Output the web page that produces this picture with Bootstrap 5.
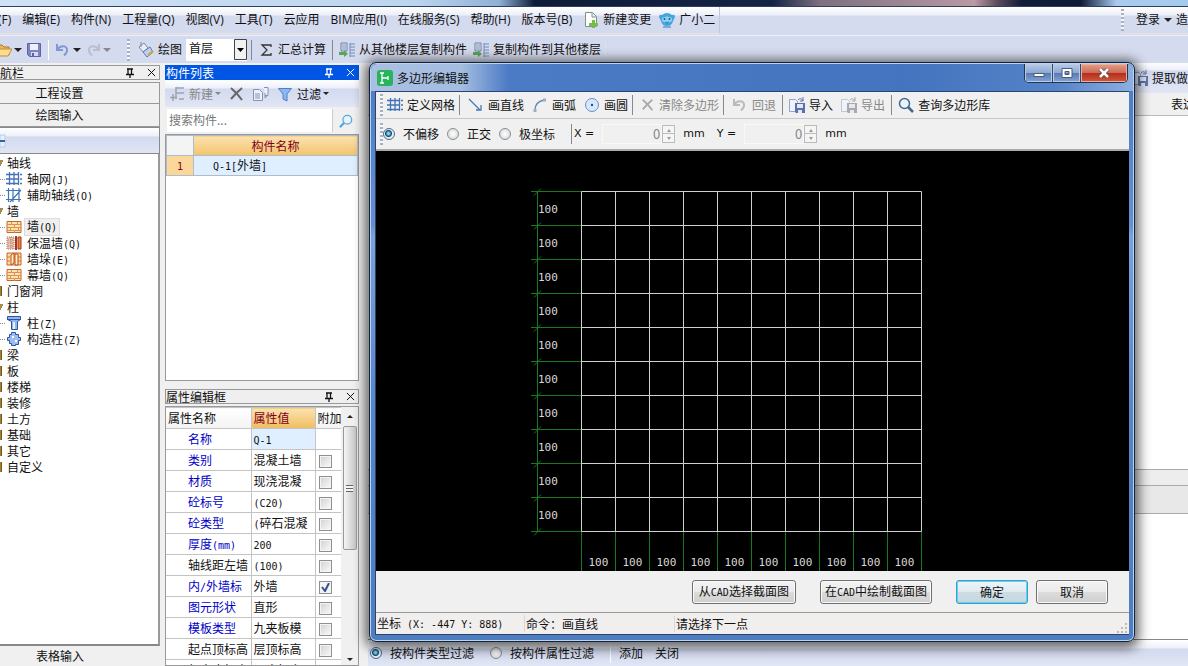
<!DOCTYPE html>
<html lang="zh-CN">
<head>
<meta charset="utf-8">
<meta name="viewport" content="width=device-width, initial-scale=1">
<title>多边形编辑器</title>
<link href="https://cdn.jsdelivr.net/npm/bootstrap@5.3.0/dist/css/bootstrap.min.css" rel="stylesheet">
<style>
body{font:12px/16px "Open Sans","Noto Sans CJK SC",sans-serif;color:#111;background:#d5dbee;height:100vh;overflow:hidden;white-space:nowrap}
svg{flex:none;display:block}
.i16{width:16px;height:16px}
.gap-m{margin-left:6px;margin-right:6px}
.gap-s{margin-left:2px}
button,input,select{font:inherit;color:inherit}
.flatbtn{border:0;background:none;padding:0;display:flex;align-items:center;gap:4px}
.flatbtn:disabled{color:#888}
.menu-link{color:#111;text-decoration:none}
.lt{font:10px/14px "DejaVu Sans Mono",monospace}
.axis{font:11px/16px "DejaVu Sans",sans-serif}
.caret{width:0;height:0;border:4px solid transparent;border-top-color:#222;border-bottom:0;flex:none}
.caret.sm{border-width:3px;border-bottom:0}
.caret.dim{border-top-color:#888}
.grip{width:3px;height:22px;background:repeating-linear-gradient(#a9b0c4 0 2px,#f6f8fd 2px 4px);flex:none}
.vsep{width:1px;height:20px;background:#85888f;flex:none}
/* application frame */
.titlestrip{height:6px;background:linear-gradient(90deg,#cfe2f6 0,#bcd5ef 35%,#8fb1d6 42%,#0d1c38 45%,#142444 65%,#7d7080 69%,#b99aa5 82%,#5a4a5d 84%,#111d38 86%,#0e1c39 91%,#a9cbef 94%,#a6c9ee 100%)}
.menubar{height:29px;border-top:1px solid #30405c;background:linear-gradient(#fff 0,#eceff9 8px,#d5dbee 9px)}
.strip{height:27px;border-right:1px solid #c2c7d8;border-bottom:1px solid #e9e4e2}
.toolstrip{height:28px;background:#d5dbee;border-top:1px solid #edf0f8}
.folder-btn{margin-left:-4px}
.floor{appearance:none;border:0;border-radius:0;width:61px;height:22px;padding:0 0 2px 3px;font-size:12px;background:#fff url("data:image/svg+xml,%3Csvg xmlns='http://www.w3.org/2000/svg' width='13' height='22'%3E%3Cpath d='M.5.5h12v20H.5z' fill='%23f2f2f2' stroke='%23444'/%3E%3Cpath d='M3 9h7l-3.500 4z' fill='%23000'/%3E%3C/svg%3E") right top no-repeat}
.shade{background:linear-gradient(#fff,#edf0f9 8px,#d3daef 9px,#e1e6f5)}
.workspace{background:#f0f0f0;padding-top:2px;gap:5px}
.song{font-family:"Noto Sans CJK SC",sans-serif}
/* navigator */
.navpane{width:160px}
.panehead{height:15px;border:1px solid #999;background:#efefef;padding-right:3px;line-height:12px;gap:12px;flex:none}
.panehead.on{background:#0055e5;color:#fff;border-color:#0055e5}
.wide-btn{height:23px;border:1px solid #999;border-width:0 1px 1px 0;background:#f0f0f0;padding:0 40px 0 0;flex:none}
.wide-btn.first{height:22px;border-top-width:1px;margin-top:2px}
.navtools{height:27px;border:1px solid #8a8a8a;border-left:0;flex:none}
.tree{border-right:2px solid #999;border-bottom:2px solid #888;background:#fff;list-style:none;margin:0;padding:1px 0 0}
.tree li{height:16px;display:flex;align-items:center;line-height:16px}
.tree .kid{gap:3px;padding-left:6px;background:repeating-linear-gradient(90deg,#888 0 1px,transparent 1px 2px) 0 8px/6px 1px no-repeat}
.tree .kid>span{padding:0 2px}
.tree .sel{background:#efefef;outline:1px solid #ddd;line-height:14px}
.twig{width:7px;flex:none;height:12px}
.twig.shut{background:linear-gradient(90deg,#b89445,#5e430d) 0 1px/2px 10px no-repeat}
.twig.open{background:linear-gradient(120deg,#a28d4b 0 60%,transparent 61%) 0 3px/3px 6px no-repeat}
/* middle column */
.midpane{width:194px}
.findbox{border:0;width:166px;height:23px;padding:0 2px 2px;background:#fff;border-right:1px solid #ccc;border-radius:0}
.findbox::placeholder{color:#777;opacity:1}
.boxed{border:1px solid #999;background:#fff}
table{border-collapse:collapse;table-layout:fixed}
.parts td,.parts th{border:1px solid #aebccc;height:20px;padding:0;font-weight:400;line-height:16px}
.gold{background:linear-gradient(#fbe2b0,#f3c36c);color:#800020}
.props td,.props th{border:1px solid #c4c4c4;border-left:0;height:21px;padding:0 2px;font-weight:400;line-height:18px;overflow:hidden}
.props th{background:linear-gradient(#fff,#f3f3f3)}
.props th.gold{background:linear-gradient(#fbe2b0,#f0bd60)}
.props td:first-child{padding-left:22px;padding-right:0;color:#0000c8}
.props td.plain:first-child{color:#111}
.props td:last-child,.props th:last-child{border-right:0}
.tick{appearance:none;display:block;width:13px;height:13px;margin:2px 0 0 1px;border:1px solid #8e8f8f;background:linear-gradient(135deg,#cfd2d6,#fafafa);box-shadow:inset 0 0 0 1px #f4f4f4}
.tick:checked{background:#f2f4f8 url("data:image/svg+xml,%3Csvg xmlns='http://www.w3.org/2000/svg' viewBox='0 0 11 11'%3E%3Cpath d='M2 5l3 4 4-8' fill='none' stroke='%2336508c' stroke-width='2'/%3E%3C/svg%3E")}
.scroller{width:17px;background:#f0f0f0;flex:none}
.thumb{width:14px;height:124px;border:1px solid #999;border-radius:2px;background:linear-gradient(90deg,#f5f5f5,#d8d8d8 60%,#c6c6c6)}
.thumb i{width:7px;height:7px;background:repeating-linear-gradient(#666 0 1px,#f4f4f4 1px 3px)}
/* drawing area behind the dialog */
.backpane{min-width:0;margin:-3px 0 0 4px}
/* dialog */
.dlg{position:absolute;left:369px;right:53px;top:62px;bottom:24px;border:1px solid #14213a;border-radius:7px;background:linear-gradient(#4a7ac4,#6590cf 28%,#79a3dc 30%,#5885c6 60%,#4e7dc0);padding:1px 5px 6px;box-shadow:inset 0 0 0 1px #b9d3f3,0 2px 12px 4px rgba(0,0,0,.6)}
.dlg-title{height:27px;margin:0 -4px;padding-left:6px;background:linear-gradient(90deg,#a9c0e2 0,#a3bce0 12%,#4c7bc5 18%,#4474bf 70%,#5583c8 90%,#8eb0df);border-radius:6px 6px 0 0}
.capbtns{height:19px;border:1px solid #25324d;border-top:0;border-radius:0 0 5px 5px;overflow:hidden;margin-right:5px}
.capbtns button{border:0;border-right:1px solid #33486d;padding:0;width:28px;background:linear-gradient(#b9cbe6,#8ca8d3 48%,#5679b2 50%,#83a4d5);display:flex;align-items:center;justify-content:center;box-shadow:inset 0 0 0 1px #b8cce8}
.capbtns .x{width:46px;border-right:0;background:linear-gradient(#e3a08d,#d06a56 48%,#b32d1c 50%,#d05a3a);box-shadow:inset 0 0 0 1px #e9b0a0}
.dlg-body{border:1px solid #2a4370;border-width:1px 0 1px 1px;background:#f0f0f0}
.row-a{height:27px;border-bottom:1px solid #c8c8c8;padding-left:4px}
.row-b{height:32px;border-bottom:2px solid #aaa;padding-left:4px}
.radio{appearance:none;width:12px;height:12px;margin:0;border:1px solid #8a8d90;border-radius:50%;background:radial-gradient(#fff,#cfd2d5);flex:none}
.radio:checked{border-color:#4c6a86;background:radial-gradient(circle at 45% 45%,#7fd0f0 0 1px,#11486f 3px,#11486f 3px,#e4eef4 4px)}
.num{width:60px;height:20px;border:1px solid #f8f8f8;background:#f0f0f0;color:#888;text-align:right;padding:0 1px 2px;font-size:13px}
.spin{width:13px;height:18px;border:1px solid #bbb;background:linear-gradient(#f5f5f5 7px,#bbb 7px 8px,#f5f5f5 8px);display:flex;flex-direction:column;align-items:center;justify-content:space-around;flex:none}
.spin .caret{border-width:2px;border-top-width:3px;border-bottom:0;border-top-color:#999}
.up{transform:rotate(180deg)}
.canvas{background:#000;min-height:0;overflow:hidden}
.canvas text{font:11px "DejaVu Sans Mono",monospace;fill:#d8d8d8}
.foot{height:41px;padding-right:21px}
.pbtn{height:24px;border:1px solid #707070;border-radius:3px;background:linear-gradient(#f3f3f3,#ebebeb 48%,#dcdcdc 50%,#cfcfcf);box-shadow:inset 0 0 0 1px #fafafa;padding:0 6px}
.pbtn.def{border-color:#3c9cc4;box-shadow:inset 0 0 0 1px #5fd2f5;background:linear-gradient(#edf5f8,#dfeaf0 48%,#cddce4 50%,#c5d8e2)}
.w72{width:72px}
.status{height:22px;border-top:1px solid #999;background:#f1eeee}
.status>div{border-right:1px solid #d8d8d8;padding-left:1px}
</style>
</head>
<body class="d-flex flex-column">
<svg width="0" height="0" class="position-absolute" aria-hidden="true">
 <symbol id="grid" viewBox="0 0 16 16"><path d="M0 3.500h16M0 8h16M0 12.500h16M3.500 1v14M8 1v14M12.500 1v14" stroke="#4272b8" stroke-width="1.300" stroke-dasharray="13 1"/></symbol>
 <symbol id="aux" viewBox="0 0 16 16"><path d="M0 3.500h15M0 12.500h15M2.500 1v14M7 1v14M13 1v14M4 15L15 3" stroke="#4272b8" stroke-width="1.200"/></symbol>
 <symbol id="brick" viewBox="0 0 16 16"><path d="M1 2.500h14v11H1z" fill="#fde3ae" stroke="#c9642a"/><path d="M1 5.500h14M1 8.500h14M1 11.500h14M5.500 3v2M11.500 3v2M8.500 6v2M4.500 9v2M12.500 9v2M8.500 12v2" stroke="#dd8f55"/></symbol>
 <symbol id="warm" viewBox="0 0 16 16"><path d="M1 2h7v12H1z" fill="#e9c5b4" stroke="#a8705c" stroke-dasharray="1 1"/><path d="M9 1h2v14H9z" fill="#ab3418"/><path d="M12 2h3v12h-3z" fill="#e8833e" stroke="#a33818"/><path d="M2 5h6M2 8h6M2 11h6M5 2v12" stroke="#b07c68" stroke-dasharray="1 1"/></symbol>
 <symbol id="pier" viewBox="0 0 16 16"><path d="M1 2h14v12H1z" fill="#fbdc9c" stroke="#c9642a"/><path d="M1 6h3M1 10h3M12 6h3M12 10h3" stroke="#d87a3c"/><path d="M5 4l3-2v10l-3 2zM9 3h3v11H9z" fill="#fff0cf" stroke="#c04c1c"/></symbol>
 <symbol id="col" viewBox="0 0 16 16"><path d="M1.500 1.500h13v3l-3 2v8h-6v-8l-4-2z" fill="#8fb4ee" stroke="#2b55a3"/><path d="M1 4.500h14" stroke="#2b55a3"/><path d="M8 7v7" stroke="#e8f1ff" stroke-width="2"/></symbol>
 <symbol id="ccol" viewBox="0 0 16 16"><path d="M3.500 3.500h2v-2h4v2h3v3h2v3h-2v4h-3v1h-4v-2h-2v-3h-2v-3h2z" fill="#9cbdf1" stroke="#2b55a3"/><path d="M6 5h2v2H6zM9 9h2v2H9z" fill="#fff"/></symbol>
 <symbol id="folder" viewBox="0 0 16 16"><path d="M0 3h6l2 2h5v8H0z" fill="#e9b85a" stroke="#a9792a"/><path d="M3 7h13l-4 7H0z" fill="#fbdc93" stroke="#c0902f"/></symbol>
 <symbol id="save" viewBox="0 0 16 16"><path d="M1.500 1.500h13v13h-11l-2-2z" fill="#7e83c6" stroke="#5c62ac"/><path d="M4 2h8v6H4z" fill="#eef0fb"/><path d="M5 10h7v4H5z" fill="#d5d8ee"/><path d="M6 11h2v3H6z" fill="#5c62ac"/></symbol>
 <symbol id="undo" viewBox="0 0 16 16"><path d="M2 2v6h6M2.500 7.500C5 3 13 3 12 9c-.4 2-1.500 3-3 4.500" fill="none" stroke="currentColor" stroke-width="2"/></symbol>
 <symbol id="paint" viewBox="0 0 16 16"><path d="M1 5l5-4 4 5-5 4z" fill="#e8edf6" stroke="#7d8aa5"/><path d="M5 10l7-5 3 5-6 5z" fill="#bcd0ef" stroke="#5c7cb0"/><path d="M10 13l5-4" stroke="#d6a335" stroke-width="2"/><path d="M3 0v5" stroke="#7d8aa5"/></symbol>
 <symbol id="copy" viewBox="0 0 16 16"><path d="M2 1h6v8H2z" fill="#e3eafa" stroke="#6c7d9c"/><path d="M3 3h4M3 5h4M3 7h4" stroke="#7b90b8"/><path d="M0 10h5v-2l4 4-4 3v-2H0z" fill="#58a85a"/><path d="M11 1v14M11 2h5M11 5h5M11 8h5M11 11h5M11 14h5" stroke="#6f8cb8"/></symbol>
 <symbol id="newdoc" viewBox="0 0 16 16"><path d="M2.500.5h7l4 4v10h-11z" fill="#fff" stroke="#7b9585"/><path d="M9 1v4h4" fill="#e1edf8" stroke="#7b9585"/><path d="M9 8h3v3h3v3h-3v2H9v-2H6v-3h3z" fill="#79bb4a"/></symbol>
 <symbol id="face" viewBox="0 0 16 16"><path d="M0 5Q0 2 3 3q5-4 10 0 3-1 3 2l-2 4q-1 5-6 5T2 9z" fill="#43a5dd"/><path d="M3 6q5-3 10 0v3q-5 4-10 0z" fill="#8fd0f2"/><circle cx="5.500" cy="7" r="1" fill="#185c91"/><circle cx="10.500" cy="7" r="1" fill="#185c91"/><path d="M6 10q2 1.500 4 0M4 15h8" stroke="#2381bb" fill="none"/></symbol>
 <symbol id="pin" viewBox="0 0 10 10"><path d="M2 1h6M3 1v5M6.500 1v5M1 6.500h8M5 6v4" fill="none" stroke="currentColor" stroke-width="1.300"/></symbol>
 <symbol id="shut" viewBox="0 0 10 10"><path d="M1 1l8 8M9 1l-8 8" stroke="currentColor" stroke-width="1.100"/></symbol>
 <symbol id="cross" viewBox="0 0 16 16"><path d="M2 2q6 5 11 12M13 2Q7 7 2 13" fill="none" stroke="currentColor" stroke-width="2"/></symbol>
 <symbol id="newitem" viewBox="0 0 16 16"><path d="M7 2h8M7 7h8M10 13h5M7 1v12M4 8v7M1 11.500h7" stroke="#9da2ae" stroke-width="1.500"/></symbol>
 <symbol id="dup" viewBox="0 0 16 16"><path d="M.5 3.500h6l3 3v8h-9zM11 1.500h4v8h-3" fill="#edf1fa" stroke="#8493b2"/><path d="M2 8h5M2 10h5M2 12h5M12 7v5l3-3" fill="none" stroke="#8493b2"/></symbol>
 <symbol id="funnel" viewBox="0 0 16 16"><path d="M1.500 2.500h13L10 8v7l-4-2V8z" fill="#8db7f2" stroke="#4c80cb"/></symbol>
 <symbol id="lens" viewBox="0 0 16 16"><circle cx="6.500" cy="6.500" r="5" fill="#e7f4fe" stroke="currentColor" stroke-width="1.500"/><path d="M10 10l5 5" stroke="currentColor" stroke-width="2.500"/></symbol>
 <symbol id="line" viewBox="0 0 16 16"><path d="M1 2l11 11M13 8v5H8" fill="none" stroke="#4778b8" stroke-width="1.300"/></symbol>
 <symbol id="arc" viewBox="0 0 16 16"><path d="M3 13Q3 5 12 3" fill="none" stroke="#5c86c0" stroke-width="1.300"/><path d="M1.500 12h3v3h-3zM11 1.500h3v3h-3z" fill="#9dadc8"/></symbol>
 <symbol id="circ" viewBox="0 0 16 16"><circle cx="8" cy="8" r="6.500" fill="#d8e8fb" stroke="#688fd0"/><circle cx="8" cy="8" r="1.200" fill="#244e9f"/></symbol>
 <symbol id="io" viewBox="0 0 16 16"><path d="M.5 2.500h6l2 2v10h-8z" fill="#eef3fd" stroke="currentColor" stroke-opacity=".6"/><path d="M6 6h10v10H7l-1-1z" fill="currentColor"/><path d="M8 7h6v4H8zM9 13h4v3H9z" fill="#e4e8f4"/><path d="M9 3q3-3 5 1M14 0v4h-3" fill="none" stroke="currentColor"/></symbol>
</svg>

<div class="titlestrip flex-shrink-0"></div>
<nav class="menubar flex-shrink-0 d-flex justify-content-between" aria-label="菜单">
 <div class="strip d-flex align-items-center pe-1" style="gap:11px">
  <a class="menu-link" href="#" style="margin-left:-2px">(F)</a><a class="menu-link" href="#">编辑(E)</a><a class="menu-link" href="#">构件(N)</a><a class="menu-link" href="#">工程量(Q)</a><a class="menu-link" href="#">视图(V)</a><a class="menu-link" href="#">工具(T)</a><a class="menu-link" href="#">云应用</a><a class="menu-link" href="#">BIM应用(I)</a><a class="menu-link" href="#">在线服务(S)</a><a class="menu-link" href="#">帮助(H)</a><a class="menu-link" href="#">版本号(B)</a>
  <div class="d-flex gap-2"><button class="flatbtn"><svg class="i16"><use href="#newdoc"/></svg>新建变更</button><button class="flatbtn"><svg class="i16"><use href="#face"/></svg>广小二</button></div>
 </div>
 <div class="strip border-end-0 d-flex align-items-center"><span class="grip me-2"></span><button class="flatbtn gap-0 ms-1">登录<span class="caret mx-1"></span></button><button class="flatbtn">造</button></div>
</nav>
<div class="toolstrip flex-shrink-0 d-flex align-items-center">
 <svg class="i16 folder-btn"><use href="#folder"/></svg><span class="caret gap-s"></span>
 <svg class="i16 ms-1"><use href="#save"/></svg><span class="vsep bg-white gap-m"></span>
 <svg class="i16" style="color:#7e9ad2"><use href="#undo"/></svg><span class="caret gap-s"></span>
 <svg class="i16 ms-1" style="color:#b9bfcd;transform:scaleX(-1)"><use href="#undo"/></svg><span class="caret dim gap-s"></span>
 <span class="grip ms-3 me-2"></span>
 <button class="flatbtn me-1"><svg class="i16"><use href="#paint"/></svg>绘图</button>
 <select class="floor" aria-label="楼层"><option>首层</option></select>
 <span class="vsep ms-1 me-2"></span>
 <button class="flatbtn"><svg width="14" height="14" viewBox="0 0 14 14"><path d="M11 4V2H2l5 5-5 5h9v-2" fill="none" stroke="#333" stroke-width="1.300"/></svg>汇总计算</button>
 <span class="vsep gap-m"></span>
 <button class="flatbtn gap-m ms-0"><svg class="i16"><use href="#copy"/></svg>从其他楼层复制构件</button>
 <button class="flatbtn pe-1 border-end"><svg class="i16"><use href="#copy"/></svg>复制构件到其他楼层</button>
</div>

<main class="workspace flex-grow-1 d-flex overflow-hidden song">
 <aside class="navpane flex-shrink-0 d-flex flex-column">
  <div class="panehead d-flex align-items-center border-start-0"><span class="me-auto">航栏</span><svg width="10" height="10"><use href="#pin"/></svg><svg width="9" height="9"><use href="#shut"/></svg></div>
  <button class="wide-btn first">工程设置</button>
  <button class="wide-btn">绘图输入</button>
  <div class="navtools shade d-flex align-items-center"><svg width="6" height="14" viewBox="0 0 6 14"><path d="M0 1h5v12H0z" fill="#e5f0ff" stroke="#b8cdea"/><path d="M0 7h5" stroke="#30659f" stroke-width="2"/></svg></div>
  <ul class="tree flex-grow-1">
   <li><i class="twig open"></i>轴线</li>
   <li class="kid"><svg class="i16"><use href="#grid"/></svg><span>轴网<span class="lt">(J)</span></span></li>
   <li class="kid"><svg class="i16"><use href="#aux"/></svg><span>辅助轴线<span class="lt">(O)</span></span></li>
   <li><i class="twig open"></i>墙</li>
   <li class="kid"><svg class="i16"><use href="#brick"/></svg><span class="sel">墙<span class="lt">(Q)</span></span></li>
   <li class="kid"><svg class="i16"><use href="#warm"/></svg><span>保温墙<span class="lt">(Q)</span></span></li>
   <li class="kid"><svg class="i16"><use href="#pier"/></svg><span>墙垛<span class="lt">(E)</span></span></li>
   <li class="kid"><svg class="i16"><use href="#brick"/></svg><span>幕墙<span class="lt">(Q)</span></span></li>
   <li><i class="twig shut"></i>门窗洞</li>
   <li><i class="twig open"></i>柱</li>
   <li class="kid"><svg class="i16"><use href="#col"/></svg><span>柱<span class="lt">(Z)</span></span></li>
   <li class="kid"><svg class="i16"><use href="#ccol"/></svg><span>构造柱<span class="lt">(Z)</span></span></li>
   <li><i class="twig shut"></i>梁</li><li><i class="twig shut"></i>板</li><li><i class="twig shut"></i>楼梯</li><li><i class="twig shut"></i>装修</li><li><i class="twig shut"></i>土方</li><li><i class="twig shut"></i>基础</li><li><i class="twig shut"></i>其它</li><li><i class="twig shut"></i>自定义</li>
  </ul>
  <button class="wide-btn border-0" style="height:20px">表格输入</button>
 </aside>

 <section class="midpane flex-shrink-0 d-flex flex-column">
  <div class="panehead on d-flex align-items-center"><span class="me-auto">构件列表</span><svg width="10" height="10"><use href="#pin"/></svg><svg width="9" height="9"><use href="#shut"/></svg></div>
  <div class="shade d-flex align-items-center ps-1 flex-shrink-0" style="height:27px">
   <button class="flatbtn me-2" disabled><svg class="i16"><use href="#newitem"/></svg>新建<span class="caret sm dim" style="margin-left:-2px"></span></button>
   <svg class="i16 me-2" style="color:#666"><use href="#cross"/></svg><svg class="i16 me-2"><use href="#dup"/></svg>
   <button class="flatbtn"><svg class="i16"><use href="#funnel"/></svg>过滤<span class="caret sm" style="margin-left:-2px"></span></button>
  </div>
  <div class="d-flex align-items-center flex-shrink-0" style="height:27px"><input class="findbox gap-s" placeholder="搜索构件..." aria-label="搜索构件"><svg class="gap-m" width="14" height="14" style="color:#56a8dc;transform:scaleX(-1)"><use href="#lens"/></svg></div>
  <div class="boxed flex-shrink-0" style="height:247px">
   <table class="parts w-100"><colgroup><col style="width:27px"><col></colgroup>
    <tr><th style="background:#f4f4f4"></th><th class="gold text-center">构件名称</th></tr>
    <tr><td class="text-center" style="background:#fcd79a;color:#800020"><span class="lt">1</span></td><td style="background:#dfefff;padding-left:19px"><span class="lt">Q-1[</span>外墙<span class="lt">]</span></td></tr>
   </table>
  </div>
  <div class="panehead d-flex align-items-center mt-2"><span class="me-auto">属性编辑框</span><svg width="10" height="10"><use href="#pin"/></svg><svg width="9" height="9"><use href="#shut"/></svg></div>
  <div class="boxed d-flex flex-grow-1 overflow-hidden" style="min-height:0;margin-top:2px">
   <table class="props flex-grow-1" style="width:174px;height:0"><colgroup><col style="width:85px"><col style="width:64px"><col></colgroup>
    <thead><tr><th>属性名称</th><th class="gold">属性值</th><th>附加</th></tr></thead>
    <tbody id="props"></tbody>
   </table>
   <div class="scroller d-flex flex-column align-items-center justify-content-between"><div class="d-flex flex-column align-items-center"><span class="caret sm up my-2"></span><div class="thumb d-flex align-items-center justify-content-center"><i></i></div></div><span class="caret sm mb-1"></span></div>
  </div>
 </section>

 <section class="backpane flex-grow-1 d-flex flex-column">
  <div class="shade d-flex justify-content-end align-items-center flex-shrink-0" style="height:31px"><svg class="i16 gap-m ms-0 me-1" style="color:#6277ad"><use href="#io"/></svg>提取做</div>
  <div class="d-flex justify-content-end align-items-center flex-shrink-0" style="height:23px;border-bottom:1px solid #bbb;margin-right:-7px">表达</div>
  <div class="bg-white flex-grow-1"></div>
  <div class="flex-shrink-0" style="height:17px;border:solid #aaa;border-width:1px 0;background:#ededed"></div>
  <div class="flex-shrink-0" style="height:28px;border-bottom:1px solid #aaa;background:#e8e8e8"></div>
  <div class="bg-white flex-shrink-0" style="height:125px"></div>
  <div class="shade d-flex align-items-center flex-shrink-0 ps-1" style="height:27px;border-top:1px solid #888">
   <input class="radio me-2" style="margin-left:-2px" type="radio" name="flt" id="f1" checked><label for="f1">按构件类型过滤</label>
   <input class="radio ms-3 me-2" type="radio" name="flt" id="f2"><label for="f2">按构件属性过滤</label>
   <span class="vsep bg-white ms-3 me-2"></span><button class="flatbtn">添加</button><button class="flatbtn ms-2 ps-1">关闭</button>
  </div>
 </section>
</main>

<section class="dlg d-flex flex-column song" role="dialog" aria-labelledby="dt">
 <header class="dlg-title flex-shrink-0 d-flex align-items-center">
  <svg width="16" height="16" viewBox="0 0 16 16" class="me-1"><rect width="16" height="16" rx="3" fill="#28b35c"/><path d="M5 3v10M5 8h6M11 6v4M3 3h4M3 13h4" stroke="#fff" stroke-width="1.300"/></svg><span id="dt">多边形编辑器</span>
  <div class="capbtns d-flex ms-auto align-self-start">
   <button aria-label="最小化"><svg width="12" height="10"><path d="M1 5.500h10v3H1z" fill="#fff" stroke="#4b5b78"/></svg></button>
   <button aria-label="最大化"><svg width="12" height="10"><path d="M1 .5h10v9H1zM4 3.500h4v3H4z" fill="#fff" fill-rule="evenodd" stroke="#4b5b78"/></svg></button>
   <button class="x" aria-label="关闭窗口"><svg width="12" height="10"><path d="M2 1l8 8M10 1L2 9" stroke="#58433f" stroke-width="4"/><path d="M2 1l8 8M10 1L2 9" stroke="#fff" stroke-width="2.500"/></svg></button>
  </div>
 </header>
 <div class="dlg-body flex-grow-1 d-flex flex-column" style="min-height:0">
  <div class="row-a flex-shrink-0 d-flex align-items-center">
   <span class="grip me-1"></span>
   <button class="flatbtn"><svg class="i16"><use href="#grid"/></svg>定义网格</button><span class="vsep ms-1 me-2"></span>
   <button class="flatbtn me-2"><svg class="i16"><use href="#line"/></svg>画直线</button>
   <button class="flatbtn me-2"><svg class="i16"><use href="#arc"/></svg>画弧</button>
   <button class="flatbtn"><svg class="i16"><use href="#circ"/></svg>画圆</button><span class="vsep ms-1 me-2"></span>
   <button class="flatbtn" disabled><svg width="14" height="14" style="color:#aaa"><use href="#cross"/></svg>清除多边形</button><span class="vsep ms-1 me-2"></span>
   <button class="flatbtn" disabled><svg class="i16" style="color:#bbb"><use href="#undo"/></svg>回退</button><span class="vsep gap-m"></span>
   <button class="flatbtn me-2"><svg class="i16" style="color:#5b70ae"><use href="#io"/></svg>导入</button>
   <button class="flatbtn" disabled><svg class="i16" style="color:#aaa"><use href="#io"/></svg>导出</button><span class="vsep gap-m"></span>
   <button class="flatbtn"><svg class="i16" style="color:#47688e"><use href="#lens"/></svg>查询多边形库</button>
  </div>
  <div class="row-b flex-shrink-0 d-flex align-items-center">
   <span class="grip"></span>
   <input class="radio gap-s" type="radio" name="mode" id="m1" checked><label class="mx-2" for="m1">不偏移</label>
   <input class="radio" type="radio" name="mode" id="m2"><label class="mx-2" for="m2">正交</label>
   <input class="radio" type="radio" name="mode" id="m3"><label class="ms-2" for="m3">极坐标</label>
   <span class="vsep ms-3"></span>
   <label class="axis gap-s" for="nx">X =</label><input class="num ms-2" id="nx" value="0" disabled><span class="spin"><i class="caret up"></i><i class="caret"></i></span><span class="axis ms-2 me-2 pe-1">mm</span>
   <label class="axis" for="ny">Y =</label><input class="num ms-2" id="ny" value="0" disabled><span class="spin"><i class="caret up"></i><i class="caret"></i></span><span class="axis ms-2">mm</span>
  </div>
  <div class="canvas flex-grow-1"><svg id="plot" width="100%" height="100%"></svg></div>
  <div class="foot flex-shrink-0 d-flex align-items-center justify-content-end">
   <button class="pbtn">从<span class="lt">CAD</span>选择截面图</button>
   <button class="pbtn ms-4 px-1">在<span class="lt">CAD</span>中绘制截面图</button>
   <button class="pbtn def w72 ms-4">确定</button>
   <button class="pbtn w72 ms-2">取消</button>
  </div>
  <div class="status flex-shrink-0 d-flex align-items-center">
   <div style="width:149px">坐标<span class="lt" style="white-space:pre"> (X: -447 Y: 888)</span></div>
   <div style="width:150px">命令：画直线</div>
   <div class="border-0">请选择下一点</div>
   <svg class="ms-auto align-self-end" width="12" height="12"><path d="M9 1v2M9 5v2M9 9v2M5 5v2M5 9v2M1 9v2" stroke="#bbb" stroke-width="2"/></svg>
  </div>
 </div>
</section>

<script src="https://cdn.jsdelivr.net/npm/bootstrap@5.3.0/dist/js/bootstrap.bundle.min.js"></script>
<script>
// property rows: name, value, whether the name is black, tick state (null = no box)
const mono = s => s.replace(/[ -~]+/g, m => `<span class="lt">${m}</span>`);
const rows = [['名称','Q-1',0,null],['类别','混凝土墙',0,0],['材质','现浇混凝',0,0],['砼标号','(C20)',0,0],['砼类型','(碎石混凝',0,0],['厚度(mm)','200',0,0],['轴线距左墙','(100)',1,0],['内/外墙标','外墙',0,1],['图元形状','直形',0,0],['模板类型','九夹板模',0,0],['起点顶标高','层顶标高',1,0],['起点底标高','层底标高',1,0]];
document.getElementById('props').innerHTML = rows.map(([n,v,k,c]) =>
 `<tr><td class="${k?'plain':''}">${mono(n)}</td><td ${c===null?'style="background:#dfefff"':''}>${mono(v)}</td><td>${c===null?'':`<input class="tick" type="checkbox" aria-label="${n}" ${c?'checked':''}>`}</td></tr>`).join('');
// ten by ten grid with its dimension lines
const X=205.5, Y=40.5, S=34, N=10, E=X+S*N, B=Y+S*N;
let white='', green=`M161.500 ${Y}V${B}`, labels='';
for(let i=0;i<=N;i++){
 const x=X+i*S, y=Y+i*S;
 white+=`M${x} ${Y}V${B}M${X} ${y}H${E}`;
 green+=`M155 ${y}H${X}M158 ${y+4}l7 -7M${x} ${B}v60`;
 if(i<N) labels+=`<text x="162" y="${y+21}">100</text><text x="${x+7}" y="${B+34}">100</text>`;
}
document.getElementById('plot').innerHTML=`<path d="${green}" stroke="#177a20" fill="none"/><path d="${white}" stroke="#cfcfcf" fill="none"/>${labels}`;
</script>
</body>
</html>
